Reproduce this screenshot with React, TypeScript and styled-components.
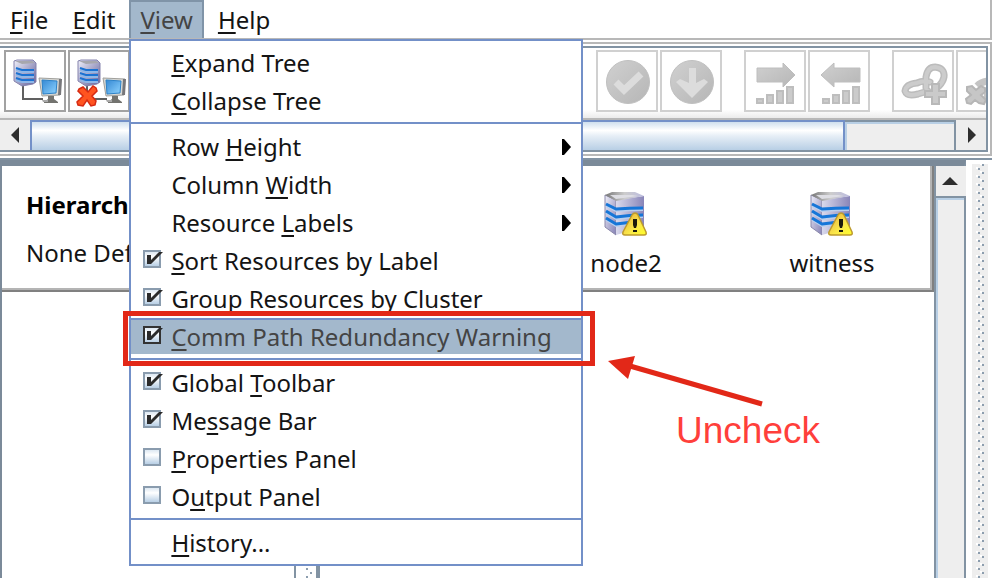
import React from "react";
import styled, { createGlobalStyle, css } from "styled-components";

const slate = "#8293a3";
const blue = "#7390c8";
const grey = "#b8b8b8";
const red = "#e22818";
const thumbFill = "linear-gradient(#cfdfee 0, #ffffff 30%, #e6eef6 50%, #b8cfe5 100%)";

const GlobalStyle = createGlobalStyle`
  * { box-sizing: border-box; }
  body { margin: 0; background: #fff; }
  button, input { font: inherit; color: inherit; margin: 0; }
`;

const Window = styled.div`
  position: relative;
  display: flex;
  flex-direction: column;
  height: 100vh;
  overflow: hidden;
  background: #fff;
  color: #141414;
  font-family: "Noto Sans", sans-serif;
  font-size: 24px;
  line-height: 38px;
  white-space: nowrap;
`;

/* Menu bar */

const MenuBar = styled.nav`
  display: flex;
  flex: none;
  gap: 4px;
  border-right: 2px solid ${grey};
  border-bottom: 2px solid ${grey};
`;

const MenuHolder = styled.div`
  position: relative;
`;

const MenuButton = styled.button<{ $open?: boolean }>`
  display: block;
  height: 38px;
  padding: 0 8px;
  border: 2px solid transparent;
  border-bottom: 0;
  background: none;
  line-height: 32px;
  ${(p) =>
    p.$open &&
    css`
      padding: 0 9px;
      border-color: #8094a8;
      background: #a3b8cc;
      color: #444;
    `}
`;

const Key = styled.u`
  text-decoration-thickness: 2px;
  text-underline-offset: 3px;
  text-decoration-skip-ink: none;
`;

const Popup = styled.div`
  position: absolute;
  z-index: 5;
  top: 39px;
  left: 0;
  min-width: 454px;
  padding: 3px 0 2px;
  border: 2px solid ${blue};
  background: #fff;
`;

const Separator = styled.hr`
  height: 2px;
  margin: 2px 0 4px;
  border: 0;
  background: ${blue};
`;

const rowStyle = css`
  display: flex;
  align-items: center;
  width: 100%;
  height: 38px;
  padding: 0 6px 0 12px;
  border: 0;
  background: none;
  text-align: left;
`;

const ItemButton = styled.button`
  ${rowStyle}
  padding-left: 40px;
`;

const ItemCheck = styled.label<{ $active?: boolean }>`
  ${rowStyle}
  position: relative;
  gap: 10px;
  ${(p) =>
    p.$active &&
    css`
      border-top: 2px solid ${blue};
      border-bottom: 2px solid #fff;
      background: #a3b8cc;
      color: #444;
      &::after {
        content: "";
        position: absolute;
        inset: -9px -14px -12px -8px;
        border: 5px solid ${red};
        pointer-events: none;
      }
    `}
`;

const ItemText = styled.span`
  flex: 1;
`;

const CheckCell = styled.span`
  display: grid;
  width: 18px;
  height: 22px;
  > * {
    grid-area: 1 / 1;
  }
`;

const CheckBox = styled.input<{ $active?: boolean }>`
  appearance: none;
  width: 18px;
  height: 18px;
  border: 2px solid ${(p) => (p.$active ? "#333" : "#8a9cae")};
  background: linear-gradient(#dde8f2, #fff 35%, #b8cfe5);
`;

const Tick = styled.svg`
  overflow: visible;
  pointer-events: none;
`;

/* Tool bar */

const ToolFrame = styled.section`
  flex: none;
  margin-top: 2px;
  padding: 2px 2px 2px 0;
  border: 2px solid ${grey};
  border-left: 0;
`;

const ToolPane = styled.div`
  border: 2px solid ${slate};
  border-left: 0;
`;

const ToolBar = styled.div`
  display: flex;
  justify-content: space-between;
  padding: 2px 0 6px 4px;
  overflow: hidden;
  border-bottom: 2px solid ${grey};
  background: linear-gradient(#fff 88%, #ebebeb);
`;

const ToolSet = styled.div<{ $overrun?: boolean }>`
  display: flex;
  gap: 22px;
  margin-right: ${(p) => (p.$overrun ? "-32px" : "0")};
`;

const ToolPair = styled.div`
  display: flex;
  gap: 2px;
`;

const ToolButton = styled.button`
  flex: none;
  width: 62px;
  height: 62px;
  padding: 0;
  border: 2px solid #a2a2a2;
  background: #fff;
  &:disabled {
    border-color: #d0d0d0;
  }
  svg {
    display: block;
  }
`;

const HScroll = styled.div`
  display: flex;
  height: 30px;
`;

const ScrollButton = styled.button`
  display: grid;
  flex: none;
  place-items: center;
  width: 30px;
  height: 30px;
  padding: 0;
  border: 0;
  background: #eee;
`;

const HThumb = styled.div`
  flex: 815;
  border: solid ${blue};
  border-width: 2px 2px 0;
  background: ${thumbFill};
`;

const HTrack = styled.div`
  flex: 109;
  border-top: 2px solid ${slate};
  border-right: 2px solid ${slate};
  background: #eee;
  box-shadow: inset 2px 2px 0 #b8cfe5;
`;

/* Work area */

const WorkArea = styled.main`
  display: flex;
  flex: 1;
  min-height: 0;
  margin-top: 2px;
  padding-right: 4px;
  border-top: 2px solid ${slate};
`;

const ScrollPane = styled.section`
  display: flex;
  flex: 1;
  margin-right: 6px;
  border: solid #7b8a99;
  border-width: 6px 2px 0;
  border-right-color: ${slate};
`;

const Content = styled.div`
  display: flex;
  flex: 1;
  flex-direction: column;
`;

const HeaderRow = styled.div`
  display: flex;
  height: 126px;
  border: solid #808080;
  border-width: 0 2px 2px 0;
  box-shadow: inset -2px -2px 0 #b4b4b4;
`;

const TreeHeader = styled.div`
  flex: 1;
  padding: 15px 0 0 24px;
  line-height: 48px;
`;

const Title = styled.div`
  font-weight: 700;
  color: #000;
`;

const ServerColumn = styled.div`
  flex: 0 0 206px;
  padding: 25px 0 0 6px;
  line-height: 48px;
  text-align: center;
  svg {
    display: block;
    margin: 0 auto;
  }
`;

const Split = styled.div`
  display: flex;
  flex: 1;
`;

const TreePane = styled.div`
  flex: 0 0 292px;
`;

const SplitBar = styled.div`
  width: 26px;
  padding: 0 4px;
  border: solid ${slate};
  border-width: 0 4px 0 2px;
`;

const VScroll = styled.div`
  display: flex;
  flex-direction: column;
  width: 30px;
  border-left: 2px solid ${slate};
`;

const VTrack = styled.div`
  flex: 1;
  border-top: 2px solid ${slate};
  background: #eee;
  box-shadow: inset 2px 2px 0 #b8cfe5;
`;

const GripBox = styled.div`
  width: 16px;
  margin-top: 4px;
  background: #eee;
  svg {
    display: block;
  }
`;

/* Callout */

const Callout = styled.div`
  position: absolute;
  top: 354px;
  left: 606px;
  color: #ff3f3b;
  font-family: "Liberation Sans", Arial, sans-serif;
  font-size: 37px;
  line-height: 42px;
  svg {
    display: block;
  }
`;

const CalloutText = styled.div`
  padding-left: 70px;
`;

function Grip({ id }: { id: string }) {
  return (
    <svg width="16" height="100%" aria-hidden="true">
      <pattern id={id} width="16" height="8" patternUnits="userSpaceOnUse">
        <path d="M4 3h2v2H4zM8 7h2v1H8zM8 0h2v1H8z" fill="#fff" />
        <path d="M6 4h2v2H6zM10 0h2v2h-2z" fill="#8c9dae" />
      </pattern>
      <rect width="16" height="100%" fill={`url(#${id})`} />
    </svg>
  );
}

function Triangle({ dir }: { dir: "left" | "right" | "up" | "sub" }) {
  const d = {
    left: "M13 1v16L5 9z",
    right: "M6 1v16l8-8z",
    up: "M0 13h16L8 5z",
    sub: "M5 1h2l7 8-7 8H5z",
  }[dir];
  return (
    <svg width="18" height="18" viewBox="0 0 18 18" aria-hidden="true">
      <path d={d} fill={dir === "sub" ? "#000" : "#2e2e2e"} />
    </svg>
  );
}

function ServerIcon() {
  return (
    <svg width="44" height="48" viewBox="0 0 44 48" aria-hidden="true">
      <defs>
        <linearGradient id="srvSide" x2="1" y2="1">
          <stop offset="0" stopColor="#eeeef8" />
          <stop offset="1" stopColor="#8480b4" />
        </linearGradient>
        <linearGradient id="srvFront" x2="1">
          <stop offset="0" stopColor="#d9d9ec" />
          <stop offset="1" stopColor="#8985b8" />
        </linearGradient>
        <linearGradient id="srvTop" x2="1">
          <stop offset="0" stopColor="#777" />
          <stop offset=".5" stopColor="#ccc" />
          <stop offset="1" stopColor="#bdbde0" />
        </linearGradient>
        <linearGradient id="warn" x2="1" y2="1">
          <stop offset="0" stopColor="#e7ac3f" />
          <stop offset=".6" stopColor="#fbe94a" />
          <stop offset="1" stopColor="#ffff28" />
        </linearGradient>
      </defs>
      <path d="M1 4 12 9v35L1 36z" fill="url(#srvSide)" stroke="#8a88aa" />
      <path d="M12 9 40 5v31l-28 8z" fill="url(#srvFront)" />
      <path d="M1 4 8 1h23l9 4-28 5z" fill="url(#srvTop)" />
      <path d="M6 4h22l6 1-22 3z" fill="#dedee4" />
      <path
        d="M2 13l10 5q14-1 27-1M2 20l10 6q14-2 27-2M2 27l10 6q9-1 16-2"
        fill="none"
        stroke="#b9cfee"
        strokeWidth="2"
        transform="translate(0 2)"
      />
      <path
        d="M2 13l10 5q14-1 27-1M2 20l10 6q14-2 27-2M2 27l10 6q9-1 16-2"
        fill="none"
        stroke="#1676d8"
        strokeWidth="3"
      />
      <path
        d="M31 22q2 0 3 2l8 17q1 3-2 3H21q-3 0-2-3l9-17q1-2 3-2z"
        fill="url(#warn)"
        stroke="#bd9a2d"
        strokeWidth="1.5"
      />
      <path d="M29 28h4v6l-1 3h-2l-1-3zM29 39h4v2h-4z" fill="#1c1a0c" />
    </svg>
  );
}

function ConnectIcon({ broken }: { broken?: boolean }) {
  return (
    <svg width="58" height="58" viewBox="0 0 58 58" aria-hidden="true">
      <defs>
        <linearGradient id="twr" x2="1" y2="1">
          <stop offset="0" stopColor="#f0f0fa" />
          <stop offset="1" stopColor="#5e5c98" />
        </linearGradient>
        <linearGradient id="scr" x2="1" y2="1">
          <stop offset="0" stopColor="#3488d4" />
          <stop offset="1" stopColor="#8fd4ff" />
        </linearGradient>
      </defs>
      <path d="M17 33v14h20" fill="none" stroke="#606060" strokeWidth="2" />
      <path d="M8 9l3-1h16l3 3v19l-3 2-11 2-8-5z" fill="url(#twr)" stroke="#8583ad" strokeWidth="1" />
      <path d="M9 9h17l3 2-13 1z" fill="#a7a7ad" />
      <path d="M10 17l6 2h12M10 22l6 2h12M10 27l6 2h12" fill="none" stroke="#8fb6e6" strokeWidth="2" transform="translate(0 1)" />
      <path d="M10 16l6 2h12M10 21l6 2h12M10 26l6 2h12" fill="none" stroke="#1b72d2" strokeWidth="2" />
      <path d="M33 26l22 1-1 16-18 1z" fill="#d8d8d4" stroke="#a0a09c" />
      <path d="M53 27h3l-1 16h-3z" fill="#77777a" />
      <path d="M36 28l15 1-1 12-13 1z" fill="url(#scr)" stroke="#2c82c8" />
      <path d="M42 44h6v3l4 3v1H38v-1l4-3z" fill="#73736f" />
      <path d="M36 48h6v2h-5z" fill="#aaa" />
      {broken && (
        <path
          d="M9 37l4-2 5 5 5-6 3 2 1 3-5 5 4 5-1 4-4 1-4-6-4 6-5-1-1-3 6-6-5-5z"
          fill="#ff5420"
          stroke="#d62a12"
          strokeWidth="1.5"
        />
      )}
    </svg>
  );
}

function GreyFade() {
  return (
    <defs>
      <linearGradient id="fade" x2="1" y2="1">
        <stop offset="0" stopColor="#d0d0d0" />
        <stop offset="1" stopColor="#b6b6b6" />
      </linearGradient>
    </defs>
  );
}

function DiscIcon({ mark }: { mark: "check" | "down" }) {
  return (
    <svg width="58" height="58" viewBox="0 0 58 58" aria-hidden="true">
      <GreyFade />
      <circle cx="30" cy="30" r="21.5" fill="url(#fade)" stroke="#c0c0c0" />
      {mark === "check" ? (
        <path d="M18 30l8 8 17-16" fill="none" stroke="#dcdcdc" strokeWidth="7" />
      ) : (
        <path d="M27 16h7v15l8-4 4 3-16 16-16-16 4-3 9 4z" fill="#dcdcdc" />
      )}
    </svg>
  );
}

function RankIcon({ left }: { left?: boolean }) {
  const x = left ? 12 : 10;
  return (
    <svg width="58" height="58" viewBox="0 0 58 58" aria-hidden="true">
      <GreyFade />
      <g fill="url(#fade)" stroke="#bebebe" strokeWidth="1">
        <path d={left ? "M50 16H24v-5L11 23l13 12v-5h26z" : "M11 16h26v-5l12 12-12 12v-5H11z"} />
        {[0, 1, 2, 3].map((i) => (
          <rect
            key={i}
            x={x + i * 10 + 1}
            y={47 - i * 4}
            width="6"
            height={4 + i * 4}
            fill="#cbcbcb"
            strokeWidth="2"
          />
        ))}
      </g>
    </svg>
  );
}

function LinkAddIcon() {
  const chain = "M32 36V25C33 19 36 15 41 15q10 1 9 10-1 5-5 9M36 30q-7-2-13 1-11 1-12 8 2 6 13 3l10-3";
  return (
    <svg width="58" height="58" viewBox="0 0 58 58" aria-hidden="true">
      <g fill="none" strokeLinecap="round" strokeLinejoin="round">
        <path d={chain} stroke="#bcbcbc" strokeWidth="7" />
        <path d={chain} stroke="#cccccc" strokeWidth="4" />
      </g>
      <path d="M38 32h7v7h7v6h-7v7h-7v-7h-7v-6h7z" fill="#cacaca" stroke="#b8b8b8" strokeWidth="2" />
    </svg>
  );
}

function LinkRemoveIcon() {
  return (
    <svg width="58" height="58" viewBox="0 0 58 58" aria-hidden="true">
      <path d="M19 34q5-5 13-5M26 44q10-1 15-8" fill="none" stroke="#c4c4c4" strokeWidth="7" />
      <path
        d="M9 35l5-1 4 4 5-4 4 2v4l-4 3 5 5-2 4-5-1-4-3-4 4-4-1-1-4 5-4-4-4z"
        fill="#c6c6c6"
        stroke="#b6b6b6"
        strokeWidth="2"
      />
    </svg>
  );
}

function Label({ text, at }: { text: string; at: number }) {
  return (
    <span>
      {text.slice(0, at)}
      <Key>{text[at]}</Key>
      {text.slice(at + 1)}
    </span>
  );
}

function Item({ text, at, sub }: { text: string; at: number; sub?: boolean }) {
  return (
    <ItemButton type="button" role="menuitem">
      <ItemText>
        <Label text={text} at={at} />
      </ItemText>
      {sub && <Triangle dir="sub" />}
    </ItemButton>
  );
}

function CheckItem({ text, at, on, active }: { text: string; at: number; on?: boolean; active?: boolean }) {
  const [checked, setChecked] = React.useState(!!on);
  return (
    <ItemCheck $active={active}>
      <CheckCell>
        <CheckBox type="checkbox" $active={active} checked={checked} onChange={() => setChecked(!checked)} />
        {checked && (
          <Tick width="20" height="18" viewBox="0 0 20 18" aria-hidden="true">
            <path d="M4 5h4v5l8-8h4L8 14H4z" fill="#2b2b2b" />
          </Tick>
        )}
      </CheckCell>
      <Label text={text} at={at} />
    </ItemCheck>
  );
}

export default function App() {
  return (
    <Window>
      <GlobalStyle />
      <MenuBar>
        <MenuButton type="button"><Label text="File" at={0} /></MenuButton>
        <MenuButton type="button"><Label text="Edit" at={0} /></MenuButton>
        <MenuHolder>
          <MenuButton type="button" $open aria-expanded="true"><Label text="View" at={0} /></MenuButton>
          <Popup role="menu">
            <Item text="Expand Tree" at={0} />
            <Item text="Collapse Tree" at={0} />
            <Separator />
            <Item text="Row Height" at={4} sub />
            <Item text="Column Width" at={7} sub />
            <Item text="Resource Labels" at={9} sub />
            <CheckItem text="Sort Resources by Label" at={0} on />
            <CheckItem text="Group Resources by Cluster" at={0} on />
            <CheckItem text="Comm Path Redundancy Warning" at={0} on active />
            <Separator />
            <CheckItem text="Global Toolbar" at={7} on />
            <CheckItem text="Message Bar" at={2} on />
            <CheckItem text="Properties Panel" at={0} />
            <CheckItem text="Output Panel" at={1} />
            <Separator />
            <Item text="History..." at={0} />
          </Popup>
        </MenuHolder>
        <MenuButton type="button"><Label text="Help" at={0} /></MenuButton>
      </MenuBar>

      <ToolFrame>
        <ToolPane>
          <ToolBar>
            <ToolPair>
              <ToolButton type="button" aria-label="Connect"><ConnectIcon /></ToolButton>
              <ToolButton type="button" aria-label="Disconnect"><ConnectIcon broken /></ToolButton>
            </ToolPair>
            <ToolSet $overrun>
              <ToolPair>
                <ToolButton type="button" disabled aria-label="In service"><DiscIcon mark="check" /></ToolButton>
                <ToolButton type="button" disabled aria-label="Out of service"><DiscIcon mark="down" /></ToolButton>
              </ToolPair>
              <ToolPair>
                <ToolButton type="button" disabled aria-label="Extend"><RankIcon /></ToolButton>
                <ToolButton type="button" disabled aria-label="Unextend"><RankIcon left /></ToolButton>
              </ToolPair>
              <ToolPair>
                <ToolButton type="button" disabled aria-label="Add dependency"><LinkAddIcon /></ToolButton>
                <ToolButton type="button" disabled aria-label="Remove dependency"><LinkRemoveIcon /></ToolButton>
              </ToolPair>
            </ToolSet>
          </ToolBar>
          <HScroll>
            <ScrollButton type="button" aria-label="Scroll left"><Triangle dir="left" /></ScrollButton>
            <HThumb />
            <HTrack />
            <ScrollButton type="button" aria-label="Scroll right"><Triangle dir="right" /></ScrollButton>
          </HScroll>
        </ToolPane>
      </ToolFrame>

      <WorkArea>
        <ScrollPane>
          <Content>
            <HeaderRow>
              <TreeHeader>
                <Title>Hierarch</Title>
                <div>None Def</div>
              </TreeHeader>
              <ServerColumn><ServerIcon />node2</ServerColumn>
              <ServerColumn><ServerIcon />witness</ServerColumn>
            </HeaderRow>
            <Split>
              <TreePane />
              <SplitBar><Grip id="gripSplit" /></SplitBar>
            </Split>
          </Content>
          <VScroll>
            <ScrollButton type="button" aria-label="Scroll up"><Triangle dir="up" /></ScrollButton>
            <VTrack />
          </VScroll>
        </ScrollPane>
        <GripBox><Grip id="gripEdge" /></GripBox>
      </WorkArea>

      <Callout>
        <svg width="160" height="56" viewBox="0 0 160 56" aria-hidden="true">
          <path d="M24 12 156 50" stroke={red} strokeWidth="5" />
          <path d="M2 7 29 2l-7 23z" fill={red} />
        </svg>
        <CalloutText>Uncheck</CalloutText>
      </Callout>
    </Window>
  );
}
